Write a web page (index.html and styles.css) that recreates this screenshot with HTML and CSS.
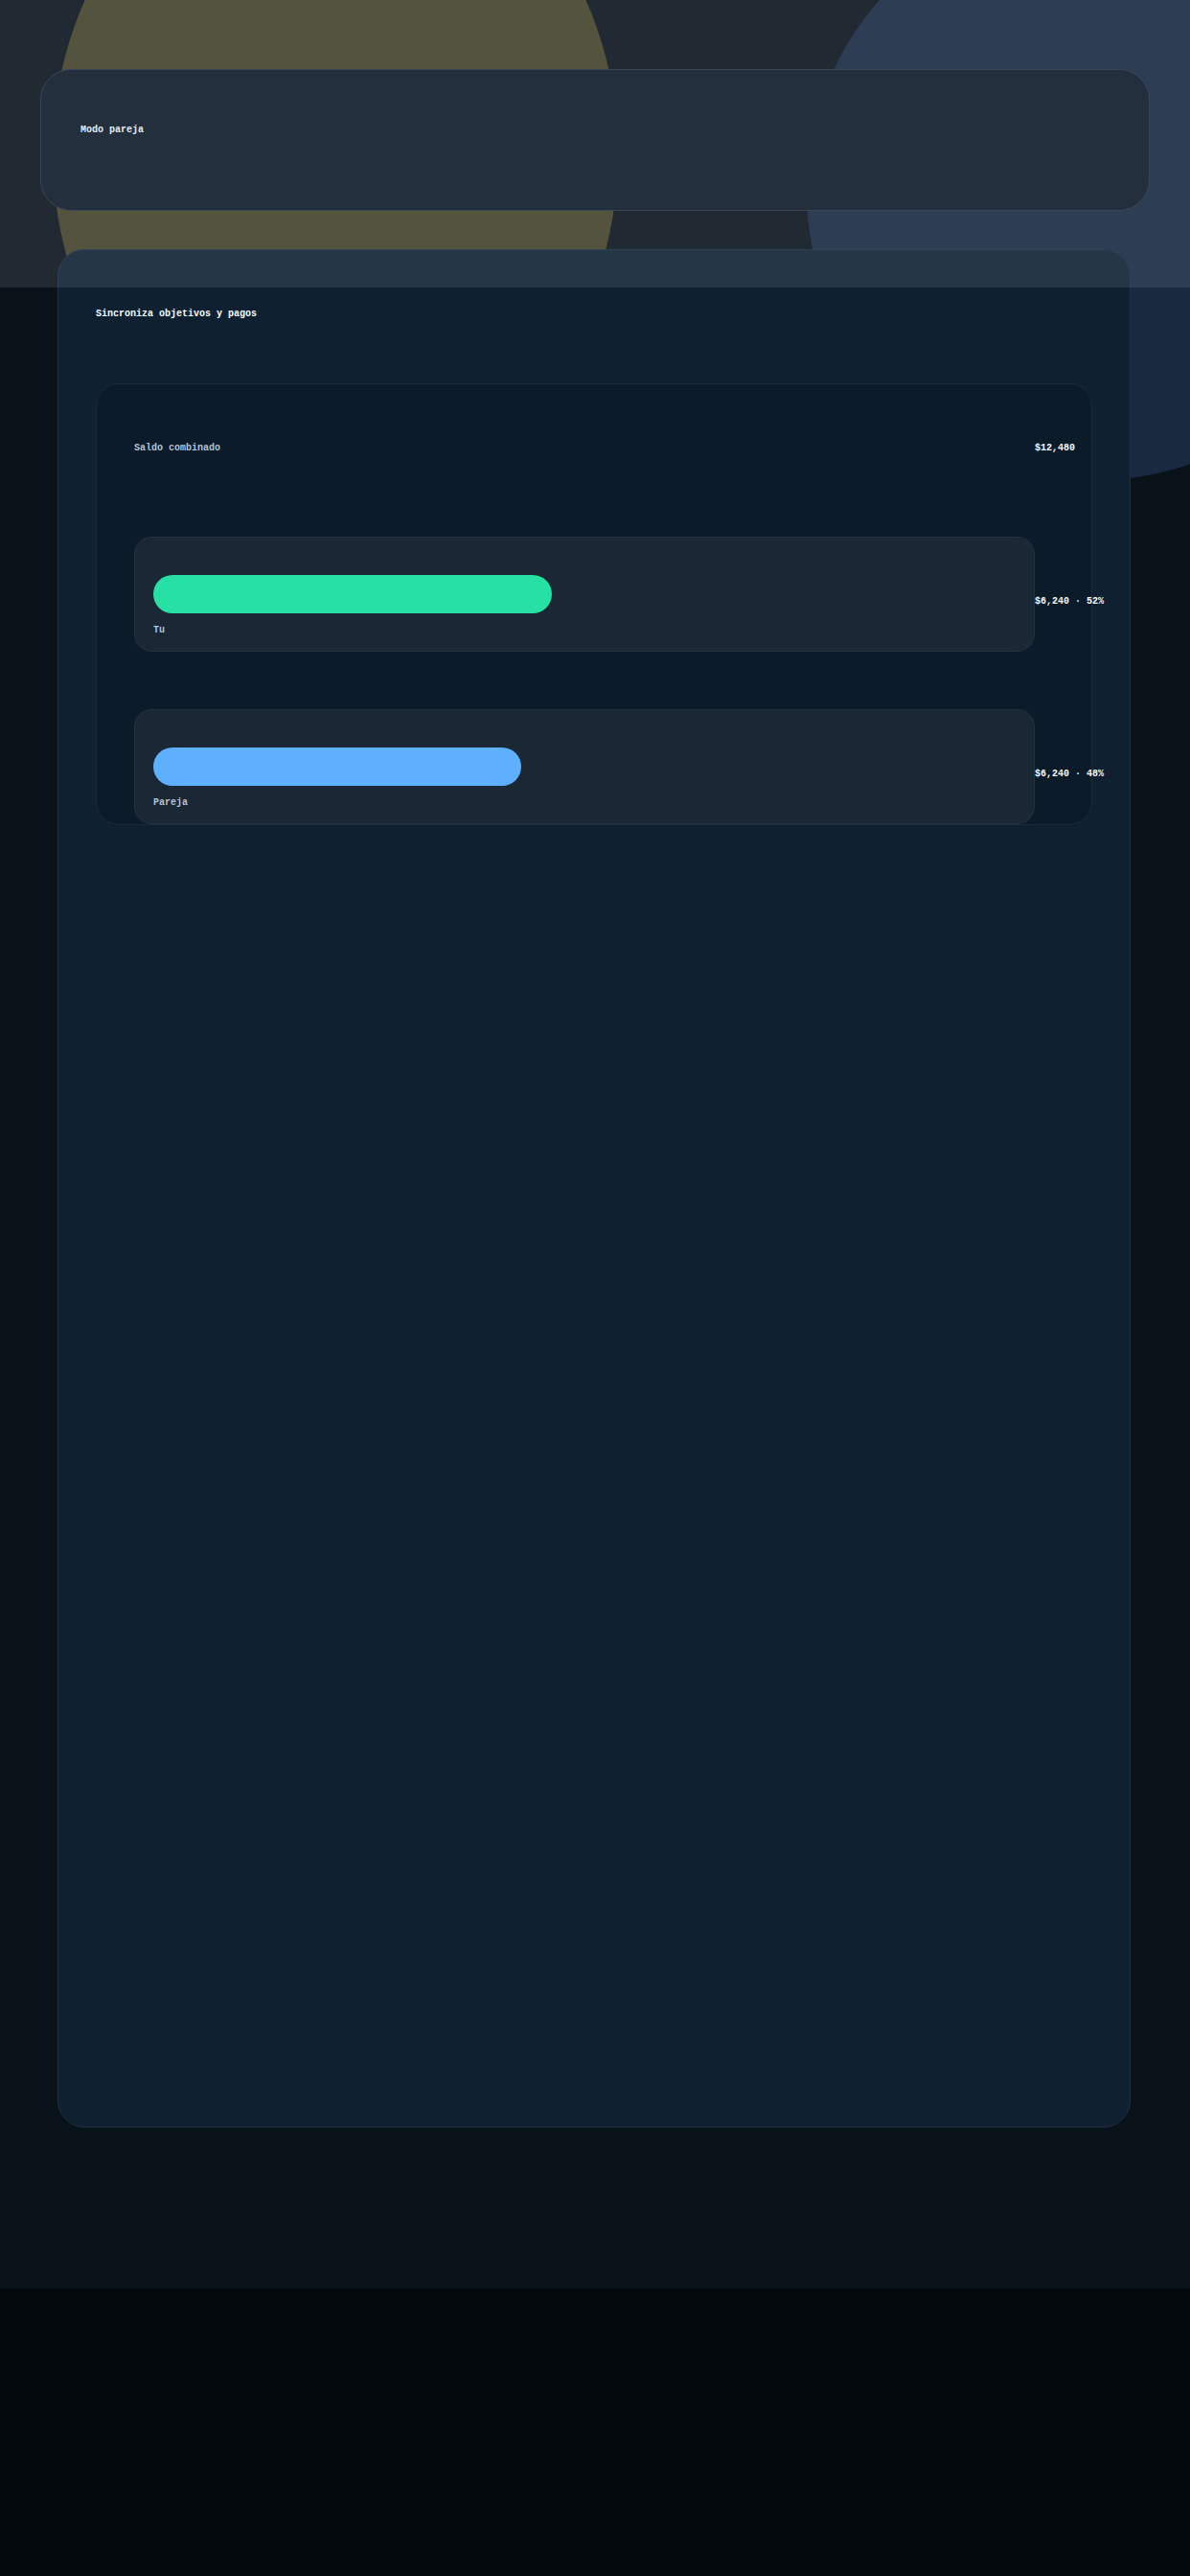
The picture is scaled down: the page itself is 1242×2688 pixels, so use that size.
FILE: index.html
```html
<!DOCTYPE html>
<html lang="es">
<head>
<meta charset="utf-8">
<title>Modo pareja</title>
<link rel="stylesheet" href="styles.css">
</head>
<body>
<div class="screen">
  <div class="blob blob-gold"></div>
  <div class="blob blob-blue"></div>
  <div class="band"></div>

  <section class="card card-mode">
    <h2 class="heading">Modo pareja</h2>
  </section>

  <section class="card card-sync">
    <h2 class="heading sync-title">Sincroniza objetivos y pagos</h2>
    <div class="panel">
      <div class="row head">
        <span class="muted">Saldo combinado</span>
        <span class="value">$12,480</span>
      </div>
      <div class="row member">
        <div class="member-box">
          <div class="track"><div class="fill fill-green" style="width:52%"></div></div>
          <span class="muted member-name">Tu</span>
        </div>
        <span class="value share">$6,240 · 52%</span>
      </div>
      <div class="row member member-second">
        <div class="member-box">
          <div class="track"><div class="fill fill-blue" style="width:48%"></div></div>
          <span class="muted member-name">Pareja</span>
        </div>
        <span class="value share">$6,240 · 48%</span>
      </div>
    </div>
  </section>
</div>
</body>
</html>
```

FILE: styles.css
```css
html {
  background: #03090d;
}
body {
  margin: 0;
  font-family: "Liberation Mono", "Courier New", monospace;
  font-size: 10px;
  font-weight: 700;
  color: #f8fafc;
}
.screen {
  position: relative;
  height: 2388px;
  overflow: hidden;
  background: #0a1219;
  display: flex;
  flex-direction: column;
  align-items: flex-start;
  padding-top: 72px;
  box-sizing: border-box;
}
.blob {
  position: absolute;
  border-radius: 50%;
  z-index: 0;
}
.blob-gold {
  left: 55px;
  top: -185px;
  width: 590px;
  height: 690px;
  background: #484526;
}
.blob-blue {
  left: 842px;
  top: -101px;
  width: 602px;
  height: 602px;
  background: #172a40;
}
.band {
  position: absolute;
  left: 0;
  top: 0;
  width: 100%;
  height: 300px;
  background: rgba(148, 163, 184, 0.17);
  z-index: 5;
  pointer-events: none;
}
.card {
  position: relative;
  z-index: 1;
  box-sizing: border-box;
  border-style: solid;
  border-width: 1px;
}
.heading {
  margin: 0;
  font-size: 10px;
  line-height: 12px;
  font-weight: 700;
  color: #f8fafc;
}
.card-mode {
  margin-left: 42px;
  width: 1158px;
  height: 148px;
  padding: 57px 41px 0;
  border-radius: 32px;
  background: #0d1925;
  border-color: #283444;
}
.card-sync {
  margin-top: 40px;
  margin-left: 60px;
  width: 1120px;
  height: 1960px;
  padding: 0 39px;
  border-radius: 28px;
  background: #0f2131;
  border-color: #1d2f40;
}
.sync-title {
  margin-top: 61px;
}
.panel {
  margin-top: 66px;
  box-sizing: border-box;
  width: 1040px;
  padding: 39px 39px 0;
  border: 1px solid #1b2a38;
  border-radius: 24px;
  background: #0b1b29;
}
.row {
  display: grid;
  grid-template-columns: 940px max-content;
  align-items: center;
  line-height: 12px;
}
.head {
  box-sizing: border-box;
  height: 52px;
  padding-top: 4px;
  margin-bottom: 68px;
}
.muted {
  color: #b7c2ce;
}
.value {
  color: #f8fafc;
  white-space: nowrap;
}
.member-second {
  margin-top: 60px;
}
.member-box {
  box-sizing: border-box;
  height: 120px;
  padding: 39px 19px 15px;
  border: 1px solid #26333f;
  border-radius: 18px;
  background: #1a2734;
  display: flex;
  flex-direction: column;
  align-items: flex-start;
}
.track {
  width: 800px;
  height: 40px;
}
.fill {
  height: 100%;
  border-radius: 20px;
}
.fill-green {
  background: #26e0a4;
}
.fill-blue {
  background: #5eb0ff;
}
.member-name {
  margin-top: 12px;
  line-height: 12px;
}
.share {
  padding-top: 15px;
}
```
